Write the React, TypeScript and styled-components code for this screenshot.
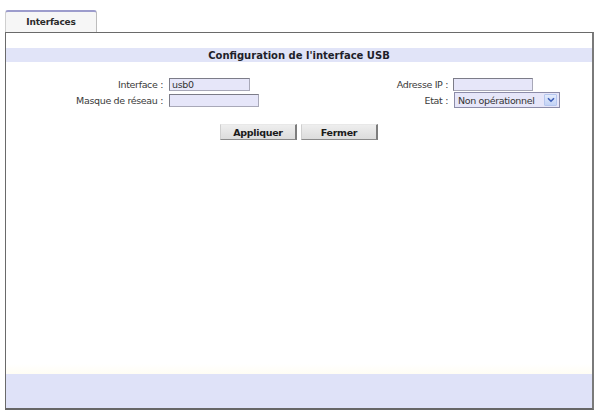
import React from "react";
import styled, { createGlobalStyle } from "styled-components";

const GlobalStyle = createGlobalStyle`
  html, body { margin: 0; padding: 0; background: #ffffff; }
  body { font-family: "DejaVu Sans", Verdana, sans-serif; color: #333; }
`;

const Page = styled.div`
  width: 598px;
  height: 415px;
  box-sizing: border-box;
  padding: 10px 4px 5px 5px;
  display: flex;
  flex-direction: column;
`;

const TabBar = styled.div`
  display: flex;
  height: 22px;
`;

const Tab = styled.div`
  width: 92px;
  box-sizing: border-box;
  background: #f6f6f6;
  border-top: 2px solid #9c9ccc;
  border-left: 1px solid #cfcfcf;
  border-right: 1px solid #bdbdbd;
  border-radius: 3px 3px 0 0;
  display: flex;
  align-items: center;
  justify-content: center;
  font-size: 9px;
  letter-spacing: -0.2px;
  font-weight: bold;
  color: #2b2b2b;
  padding-bottom: 1px;
`;

const Panel = styled.div`
  flex: 1;
  display: flex;
  flex-direction: column;
  border: 1px solid #6a6a6a;
  border-right: 2px solid #7a7a7a;
  border-bottom: 2px solid #666;
`;

const TitleBar = styled.div`
  margin-top: 15px;
  height: 14px;
  background: #e1e4f8;
  display: flex;
  align-items: center;
  justify-content: center;
  font-size: 10px;
  font-weight: bold;
  color: #1f1f2a;
`;

const FormGrid = styled.div`
  margin-top: 15px;
  display: grid;
  grid-template-columns: 157px 173px 100px 1fr;
  grid-auto-rows: 15px 16px;
  column-gap: 6px;
  align-items: center;
`;

const Label = styled.div`
  text-align: right;
  font-size: 9.5px;
  letter-spacing: -0.35px;
  color: #3a3a3a;
  white-space: nowrap;
`;

const TextInput = styled.div<{ $w: number; $shift?: number }>`
  width: ${(p) => p.$w}px;
  height: 13px;
  margin-left: ${(p) => p.$shift ?? 0}px;
  box-sizing: border-box;
  background: #e6e6f9;
  border: 1px solid #a8a8b8;
  border-top-color: #7c7c88;
  border-left-color: #7c7c88;
  font-size: 9.5px;
  letter-spacing: -0.3px;
  line-height: 11px;
  padding-left: 2px;
  color: #333;
`;

const SelectBox = styled.div`
  width: 106px;
  height: 16px;
  box-sizing: border-box;
  background: #e6e6f9;
  border: 1px solid #8c8ca8;
  display: flex;
  align-items: center;
  justify-content: space-between;
  font-size: 9.5px;
  letter-spacing: -0.35px;
  color: #333;
  padding-left: 3px;
  padding-right: 2px;
`;

const SelectArrow = styled.div`
  width: 13px;
  height: 12px;
  box-sizing: border-box;
  background: linear-gradient(#e3ebfc, #c3d3f5);
  border: 1px solid #b5c6ee;
  border-radius: 1px;
  display: flex;
  align-items: center;
  justify-content: center;
`;

const ButtonRow = styled.div`
  margin-top: 16px;
  display: flex;
  justify-content: center;
  gap: 4px;
`;

const Button = styled.div`
  width: 77px;
  height: 16px;
  box-sizing: border-box;
  background: linear-gradient(#eeeeee, #dcdcdc);
  border-top: 1px solid #e8e8e8;
  border-left: 1px solid #cfcfcf;
  border-right: 2px solid #7d7d7d;
  border-bottom: 1px solid #8a8a8a;
  display: flex;
  align-items: center;
  justify-content: center;
  font-size: 9.5px;
  letter-spacing: -0.3px;
  font-weight: bold;
  color: #1a1a1a;
`;

const Filler = styled.div`
  flex: 1;
  background: linear-gradient(#ffffff 0, #ffffff calc(100% - 10px), #fffdf4 100%);
`;

const Footer = styled.div`
  height: 34px;
  background: #dfe2f8;
`;

export default function App() {
  return (
    <>
      <GlobalStyle />
      <Page>
        <TabBar>
          <Tab>Interfaces</Tab>
        </TabBar>
        <Panel>
          <TitleBar>Configuration de l'interface USB</TitleBar>
          <FormGrid>
            <Label>Interface :</Label>
            <TextInput $w={81}>usb0</TextInput>
            <Label>Adresse IP :</Label>
            <TextInput $w={80} $shift={-1} />
            <Label>Masque de réseau :</Label>
            <TextInput $w={90} />
            <Label>Etat :</Label>
            <SelectBox>
              <span>Non opérationnel</span>
              <SelectArrow>
                <svg width="8" height="6" viewBox="0 0 8 6">
                  <path d="M1 1.2 L4 4.2 L7 1.2" fill="none" stroke="#3d5fb8" strokeWidth="1.6" />
                </svg>
              </SelectArrow>
            </SelectBox>
          </FormGrid>
          <ButtonRow>
            <Button>Appliquer</Button>
            <Button>Fermer</Button>
          </ButtonRow>
          <Filler />
          <Footer />
        </Panel>
      </Page>
    </>
  );
}
